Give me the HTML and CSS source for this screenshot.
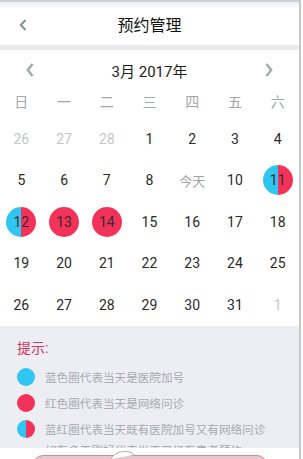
FILE: index.html
```html
<html>
    <head>
        <title>预约管理</title>
        <link rel="stylesheet" href="styles.css">
    </head>

    <body>
        <div class="page">
            <header class="topbar">
                <span class="back">
                    <svg width="10" height="14" viewBox="0 0 10 14"><path d="M7.5 2 L2.8 7 L7.5 12" fill="none" stroke="#8a8f93" stroke-width="2"/></svg>
                </span>
                <span class="title">预约管理</span>
            </header>
            <div class="divider"></div>

            <section class="calendar">
                <div class="month-nav">
                    <svg width="10" height="16" viewBox="0 0 10 16"><path d="M7.5 2 L2.8 8 L7.5 14" fill="none" stroke="#a3a9ad" stroke-width="2.4"/></svg>
                    <span class="month">3月 2017年</span>
                    <svg width="10" height="16" viewBox="0 0 10 16"><path d="M2.5 2 L7.2 8 L2.5 14" fill="none" stroke="#a3a9ad" stroke-width="2.4"/></svg>
                </div>
                <div class="weekdays">
                    <span>日</span><span>一</span><span>二</span><span>三</span><span>四</span><span>五</span><span>六</span>
                </div>
                <div class="dates">
                    <span class="other">26</span><span class="other">27</span><span class="other">28</span>
                    <span>1</span><span>2</span><span>3</span><span>4</span>

                    <span>5</span><span>6</span><span>7</span><span>8</span>
                    <span class="today">今天</span><span>10</span>
                    <span><i class="dot both">11</i></span>

                    <span><i class="dot both">12</i></span>
                    <span><i class="dot red">13</i></span>
                    <span><i class="dot red">14</i></span>
                    <span>15</span><span>16</span><span>17</span><span>18</span>

                    <span>19</span><span>20</span><span>21</span><span>22</span><span>23</span><span>24</span><span>25</span>

                    <span>26</span><span>27</span><span>28</span><span>29</span><span>30</span><span>31</span>
                    <span class="other">1</span>
                </div>
            </section>

            <section class="tips">
                <p class="tips-title">提示:</p>
                <div class="tip"><i class="mark blue"></i>蓝色圈代表当天是医院加号</div>
                <div class="tip"><i class="mark red"></i>红色圈代表当天是网络问诊</div>
                <div class="tip"><i class="mark both"></i>蓝红圈代表当天既有医院加号又有网络问诊</div>
                <div class="tip last">如有多天刚好代表当天已经有患者预约</div>
            </section>
        </div>

        <!-- bottom bar over the list -->
        <div class="bottom-bar">
            <div class="book-btn"></div>
            <svg class="mascot" width="30" height="10" viewBox="0 0 30 10"><path d="M3 10 C5 5 12 2 19 2.5 C23 3 25 4 26 6" fill="#fff" stroke="#9a9a9a" stroke-width="0.8"/></svg>
        </div>
    </body>
</html>
```

FILE: styles.css
```css
/* Page base */
body {
    margin: 0;
    background-color: #fff;
    font-family: Roboto, "Noto Sans CJK SC", sans-serif;
    overflow: hidden;
}

.page {
    width: 299px;
    height: 459px;
    border-right: 2px solid #c6c8ca;
    overflow: hidden;
}

/* Top bar */
.topbar {
    height: 43px;
    border-top: 2px solid #cfd1d3;
    background: linear-gradient(#eceef0, #fff 7px);
    display: flex;
    align-items: center;
    justify-content: center;
    position: relative;
}

.back {
    position: absolute;
    left: 18px;
    top: 16px;
}

.title {
    font-size: 16px;
    color: #111;
}

.divider {
    height: 5px;
    background-color: #e9ebee;
}

/* Calendar */
.month-nav {
    height: 40px;
    display: flex;
    align-items: center;
    justify-content: space-between;
    padding: 0 25px;
}

.month {
    font-size: 15px;
    color: #1d1d1d;
}

.weekdays {
    display: grid;
    grid-template-columns: repeat(7, 1fr);
    height: 22px;
    margin-bottom: 6px;
    align-items: center;
    text-align: center;
    font-size: 14px;
    color: #a2a6aa;
}

.dates {
    display: grid;
    grid-template-columns: repeat(7, 1fr);
    grid-auto-rows: 41.5px;
}

.dates span {
    display: flex;
    align-items: center;
    justify-content: center;
    font-size: 14px;
    color: #2a2a2a;
}

.dates .other {
    color: #c4c6c8;
}

.dates .today {
    font-size: 13px;
    color: #a0a4a8;
}

.dot {
    width: 30px;
    height: 30px;
    border-radius: 50%;
    display: flex;
    align-items: center;
    justify-content: center;
    font-style: normal;
    color: #3a2a30;
}

.red {
    background-color: #f3325a;
}

.blue {
    background-color: #2fc6f3;
}

.both {
    background: linear-gradient(to right, #2fc6f3 50%, #f3325a 50%);
}

/* Tips */
.tips {
    background-color: #eceef3;
    padding: 13px 0 0 17px;
    height: 140px;
}

.tips-title {
    margin: 0 0 7px 0;
    font-size: 14px;
    line-height: 18px;
    color: #d2385f;
}

.tip {
    display: flex;
    align-items: center;
    height: 26px;
    font-size: 11.6px;
    color: #a8abb0;
}

.tip.last {
    margin-top: -5px;
    padding-left: 28px;
}

.mark {
    width: 18px;
    height: 18px;
    border-radius: 50%;
    margin-right: 10px;
}

/* Bottom bar */
.bottom-bar {
    position: absolute;
    left: 0;
    top: 448px;
    width: 299px;
    height: 11px;
    background-color: #fff;
}

.book-btn {
    position: absolute;
    left: 33px;
    top: 7px;
    width: 234px;
    height: 20px;
    border-radius: 10px;
    background-color: #e9c6cd;
    border-top: 1px solid #c98e98;
}

.mascot {
    position: absolute;
    left: 108px;
    top: 1px;
}
```
